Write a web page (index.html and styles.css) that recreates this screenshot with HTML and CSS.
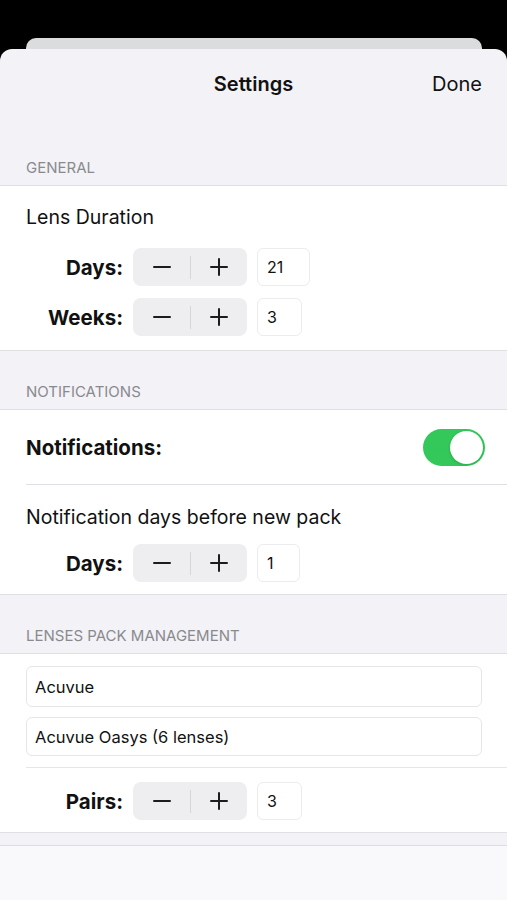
FILE: index.html
```html
<!DOCTYPE html>
<html lang="en">
<head>
  <meta charset="UTF-8">
  <meta name="viewport" content="width=device-width, initial-scale=1.0" />
  <title>Settings</title>
  <link rel="stylesheet" href="styles.css">
</head>
<body>

  <div class="back-card"></div>

  <div class="sheet">
    <div class="nav">
      <span class="nav-title">Settings</span>
      <span class="nav-done">Done</span>
    </div>

    <div class="section-header first">General</div>
    <div class="section general">
      <div class="cell-title">Lens Duration</div>
      <div class="stepper-row">
        <span class="row-label">Days:</span>
        <div class="stepper">
          <span class="half"><span class="minus"></span></span>
          <span class="half"><span class="plus"></span></span>
        </div>
        <div class="value wide">21</div>
      </div>
      <div class="stepper-row">
        <span class="row-label">Weeks:</span>
        <div class="stepper">
          <span class="half"><span class="minus"></span></span>
          <span class="half"><span class="plus"></span></span>
        </div>
        <div class="value">3</div>
      </div>
    </div>

    <div class="section-header">Notifications</div>
    <div class="section notifications">
      <div class="toggle-row">
        <span class="bold-label">Notifications:</span>
        <div class="toggle"><span class="knob"></span></div>
      </div>
      <div class="inner">
        <div class="cell-title">Notification days before new pack</div>
        <div class="stepper-row">
          <span class="row-label">Days:</span>
          <div class="stepper">
            <span class="half"><span class="minus"></span></span>
            <span class="half"><span class="plus"></span></span>
          </div>
          <div class="value narrow">1</div>
        </div>
      </div>
    </div>

    <div class="section-header">Lenses pack management</div>
    <div class="section lenses">
      <div class="fields">
        <div class="text-field tall">Acuvue</div>
        <div class="text-field">Acuvue Oasys (6 lenses)</div>
      </div>
      <div class="stepper-row pairs">
        <span class="row-label">Pairs:</span>
        <div class="stepper">
          <span class="half"><span class="minus"></span></span>
          <span class="half"><span class="plus"></span></span>
        </div>
        <div class="value">3</div>
      </div>
    </div>

    <div class="bottom-bar"></div>
  </div>

</body>
</html>
```

FILE: styles.css
```css
body {
  margin: 0;
  padding-top: 38px;
  background: #000;
  font-family: Inter, 'Noto Sans', sans-serif;
  color: #111;
  height: 900px;
  overflow: hidden;
}
.back-card {
  height: 11px;
  margin: 0 25px 0 26px;
  background: #dadcdd;
  border-radius: 10px 10px 0 0;
}
.sheet {
  background: #f2f2f7;
  border-radius: 12px 12px 0 0;
  height: 851px;
  display: flex;
  flex-direction: column;
}
.nav {
  height: 70px;
  position: relative;
  display: flex;
  align-items: center;
  justify-content: center;
}
.nav-title {
  font-size: 20px;
  font-weight: 600;
}
.nav-done {
  position: absolute;
  right: 25px;
  font-size: 20px;
}
.section-header {
  height: 59px;
  box-sizing: border-box;
  padding: 0 26px 8px;
  display: flex;
  align-items: flex-end;
  font-size: 15px;
  line-height: 18px;
  color: #8a8a8e;
  text-transform: uppercase;
  border-bottom: 1px solid #e0e0e4;
}
.section-header.first {
  height: 67px;
}
.section {
  background: #fff;
  border-bottom: 1px solid #e0e0e4;
}
.general {
  padding: 19px 0 14px 26px;
}
.cell-title {
  font-size: 19.5px;
  line-height: 24px;
  margin-bottom: 19px;
}
.stepper-row {
  display: flex;
  align-items: center;
  gap: 10px;
  height: 38px;
}
.stepper-row + .stepper-row {
  margin-top: 12px;
}
.row-label {
  width: 97px;
  text-align: right;
  font-size: 20.5px;
  font-weight: 700;
}
.stepper {
  width: 114px;
  height: 38px;
  background: #eeeef0;
  border-radius: 8px;
  display: flex;
  position: relative;
}
.stepper::after {
  content: '';
  position: absolute;
  left: 57px;
  top: 8px;
  width: 1px;
  height: 23px;
  background: #d6d6d9;
}
.half {
  flex: 1;
  display: flex;
  align-items: center;
  justify-content: center;
}
.minus,
.plus {
  width: 18px;
  height: 18px;
  position: relative;
}
.minus::before,
.plus::before,
.plus::after {
  content: '';
  position: absolute;
  background: #1c1c1e;
  border-radius: 1px;
}
.minus::before,
.plus::before {
  left: 0;
  top: 8px;
  width: 18px;
  height: 2px;
}
.plus::after {
  left: 8px;
  top: 0;
  width: 2px;
  height: 18px;
}
.value {
  width: 45px;
  height: 38px;
  box-sizing: border-box;
  border: 1px solid #ececee;
  border-radius: 6px;
  padding-left: 9px;
  display: flex;
  align-items: center;
  font-size: 16px;
}
.value.wide {
  width: 53px;
}
.value.narrow {
  width: 43px;
}
.toggle-row {
  height: 74px;
  margin-left: 26px;
  padding-right: 22px;
  border-bottom: 1px solid #e0e0e4;
  display: flex;
  align-items: center;
  justify-content: space-between;
}
.bold-label {
  font-size: 20.5px;
  font-weight: 700;
}
.toggle {
  width: 62px;
  height: 37px;
  border-radius: 19px;
  background: #34c759;
  position: relative;
}
.knob {
  position: absolute;
  right: 2px;
  top: 2px;
  width: 33px;
  height: 33px;
  border-radius: 50%;
  background: #fff;
  box-shadow: 0 1px 3px rgba(0, 0, 0, 0.15);
}
.inner {
  padding: 20px 0 12px 26px;
}
.inner .cell-title {
  margin-bottom: 15px;
}
.lenses {
  padding-top: 12px;
}
.fields {
  margin-left: 26px;
  padding: 0 25px 11px 0;
  border-bottom: 1px solid #e6e6ea;
  display: flex;
  flex-direction: column;
  gap: 10px;
}
.text-field {
  height: 39px;
  box-sizing: border-box;
  border: 1px solid #e6e6e8;
  border-radius: 6px;
  padding-left: 8px;
  display: flex;
  align-items: center;
  font-size: 16.5px;
}
.text-field.tall {
  height: 41px;
}
.pairs {
  margin: 14px 0 12px 26px;
}
.bottom-bar {
  margin-top: 12px;
  flex: 1;
  background: #f9f9fb;
  border-top: 1px solid #dedee2;
}
```
